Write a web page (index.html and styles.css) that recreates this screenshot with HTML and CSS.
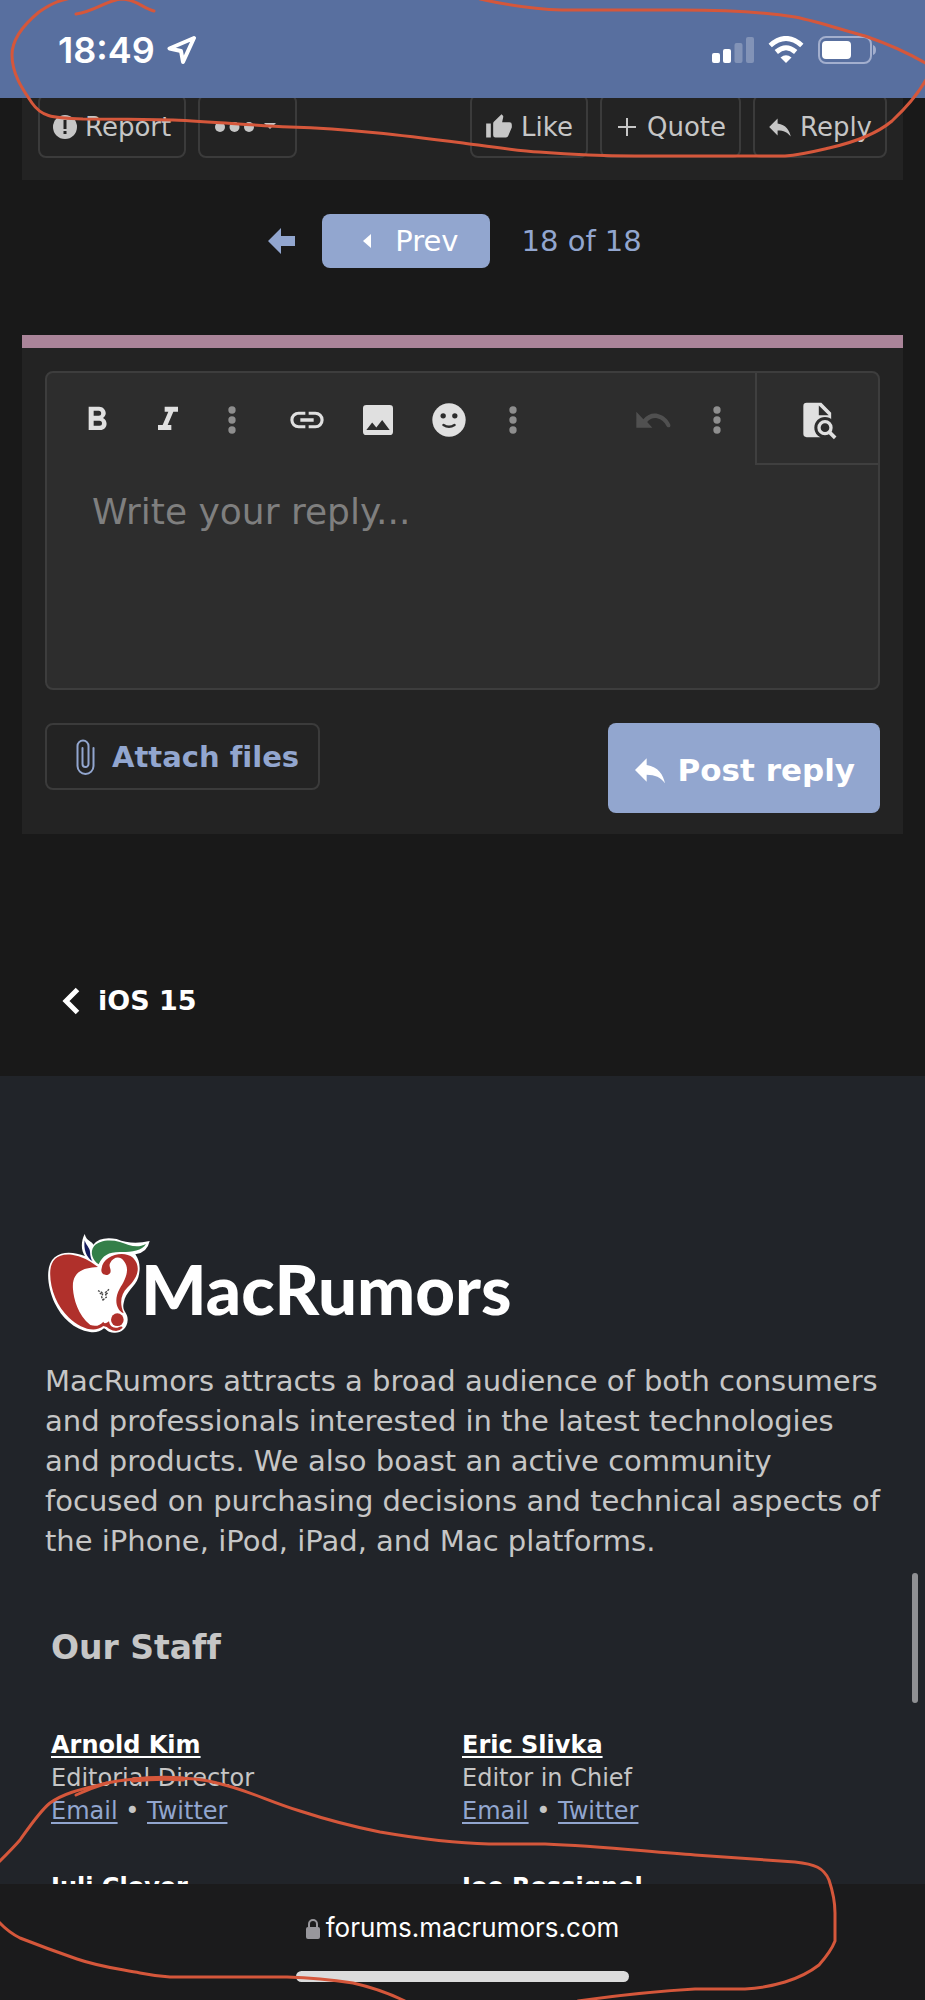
FILE: index.html
```
<!DOCTYPE html>
<html lang="en">
<head>
<meta charset="utf-8">
<meta name="viewport" content="width=device-width">
<title>MacRumors Forums</title>
<link rel="stylesheet" href="styles.css">
</head>
<body>
<header class="status">
  <span class="status-time">18:49</span>
  <svg class="location" width="30" height="30" viewBox="0 0 30 30" aria-hidden="true"><path d="M27 3 L2.500 13.500 L14 16 L16 27 Z"/></svg>
  <div class="status-icons">
    <svg width="42" height="28" viewBox="0 0 42 28" fill="#fff" aria-hidden="true"><rect y="17" width="8" height="10" rx="2"/><rect x="11" y="13" width="8" height="14" rx="2"/><g opacity=".25"><rect x="22.500" y="7" width="8" height="20" rx="2"/><rect x="34" y="1" width="8" height="26" rx="2"/></g></svg>
    <svg width="36" height="28" viewBox="0 0 36 28" aria-hidden="true"><g fill="none" stroke="#fff" stroke-width="5"><path d="M2.200 9.500Q18-4.500 33.800 9.500"/><path d="M8.300 16Q18 7.500 27.700 16"/></g><path d="M12.500 21.500Q18 17 23.500 21.500L18 27Z" fill="#fff"/></svg>
    <svg width="59" height="28" viewBox="0 0 59 28" aria-hidden="true"><rect x="1" y="1" width="52" height="26" rx="7" fill="none" stroke="#a3afce" stroke-width="2"/><rect x="4" y="5" width="29" height="18" rx="4" fill="#fff"/><path d="M55 9Q58 10 58 14T55 19Z" fill="#a3afce"/></svg>
  </div>
</header>

<main class="page">
  <section class="post">
    <div class="post-actions">
      <button class="action"><svg width="24" height="24" viewBox="0 0 24 24" aria-hidden="true"><circle cx="12" cy="12" r="12"/><path d="M10.500 5h3v9h-3zM10.500 16h3v3h-3z" fill="#232323"/></svg>Report</button>
      <button class="action" aria-label="More options"><svg width="69" height="24" viewBox="-1 0 69 24" aria-hidden="true"><circle cx="6" cy="12" r="5"/><circle cx="20.500" cy="12" r="5"/><circle cx="35" cy="12" r="5"/><path d="M50 8h12l-6 6z"/></svg></button>
      <span class="spacer"></span>
      <button class="action"><svg width="28" height="28" viewBox="0 0 24 24" aria-hidden="true"><path d="M23 10a2 2 0 0 0-2-2h-6.320l.96-4.570c.02-.1.030-.21.030-.32 0-.41-.17-.79-.44-1.060L14.170 1 7.590 7.580C7.220 7.950 7 8.450 7 9v10a2 2 0 0 0 2 2h9c.83 0 1.540-.5 1.840-1.220l3.020-7.050c.09-.23.14-.47.14-.73zM1 21h4V9H1z"/></svg>Like</button>
      <button class="action"><svg width="24" height="24" viewBox="0 0 24 24" aria-hidden="true"><path d="M11 3h2v8h8v2h-8v8h-2v-8H3v-2h8z"/></svg>Quote</button>
      <button class="action"><svg width="24" height="24" viewBox="2 2 20 20" aria-hidden="true"><path d="M10 9V5l-7 7 7 7v-4.100c5 0 8.500 1.600 11 5.100-1-5-4-10-11-11z"/></svg>Reply</button>
    </div>
  </section>

  <nav class="pager" aria-label="Pages">
    <a class="first" href="#first" aria-label="First page"><svg width="27" height="26" viewBox="0 0 27 26" aria-hidden="true"><path d="M0 13L13 0v8h14v10H13v8z"/></svg></a>
    <a class="prev" href="#prev"><svg width="8" height="14" viewBox="0 0 8 14" aria-hidden="true"><path d="M0 7l8-7v14z"/></svg>Prev</a>
    <a class="count" href="#pages">18 of 18</a>
  </nav>

  <form class="reply">
    <div class="editor">
      <div class="toolbar">
        <button type="button" class="tool" aria-label="Bold"><svg class="icon" viewBox="0 0 24 24"><path d="M13.500 15.500H10v-3h3.500a1.500 1.500 0 0 1 0 3M10 6.500h3a1.500 1.500 0 0 1 0 3h-3m5.600 1.290c.97-.68 1.650-1.790 1.650-2.790 0-2.260-1.750-4-4-4H7v14h7.040c2.100 0 3.710-1.700 3.710-3.790 0-1.520-.86-2.820-2.150-3.420z"/></svg></button>
        <button type="button" class="tool" aria-label="Italic"><svg class="icon" viewBox="0 0 24 24"><path d="M10 4v3h2.210l-3.420 8H6v3h8v-3h-2.210l3.420-8H18V4z"/></svg></button>
        <button type="button" class="tool more" aria-label="More text options"><svg class="icon" viewBox="0 0 24 24"><circle cx="12" cy="6" r="2.200"/><circle cx="12" cy="12" r="2.200"/><circle cx="12" cy="18" r="2.200"/></svg></button>
        <button type="button" class="tool group" aria-label="Insert link"><svg class="icon" viewBox="0 0 24 24"><path d="M3.900 12c0-1.710 1.390-3.100 3.100-3.100h4V7H7a5 5 0 0 0 0 10h4v-1.900H7c-1.710 0-3.100-1.390-3.100-3.100M8 13h8v-2H8zm9-6h-4v1.900h4a3.100 3.100 0 0 1 0 6.200h-4V17h4a5 5 0 0 0 0-10z"/></svg></button>
        <button type="button" class="tool" aria-label="Insert image"><svg class="icon" viewBox="0 0 24 24"><path d="M8.500 13.500l2.500 3 3.500-4.500 4.500 6H5m16 1V5a2 2 0 0 0-2-2H5a2 2 0 0 0-2 2v14a2 2 0 0 0 2 2h14a2 2 0 0 0 2-2z"/></svg></button>
        <button type="button" class="tool" aria-label="Smilies"><svg class="icon" viewBox="0 0 24 24"><circle cx="12" cy="12" r="10"/><g fill="#2d2d2d"><circle cx="8.500" cy="9.500" r="1.600"/><circle cx="15.500" cy="9.500" r="1.600"/></g><path d="M8.700 15Q12 17.200 15.300 15" fill="none" stroke="#2d2d2d" stroke-width="1.500" stroke-linecap="round"/></svg></button>
        <button type="button" class="tool more" aria-label="More insert options"><svg class="icon" viewBox="0 0 24 24"><circle cx="12" cy="6" r="2.200"/><circle cx="12" cy="12" r="2.200"/><circle cx="12" cy="18" r="2.200"/></svg></button>
        <span class="spacer"></span>
        <button type="button" class="tool undo" aria-label="Undo"><svg class="icon" viewBox="0 0 24 24"><path d="M6.200 11.600C8.600 8.600 12 7.600 15 8.400c3.500.8 6 3.300 7.400 6.400.5 1.500-1.600 2.200-2.300.8-1.100-2.500-3-4.200-5.700-4.700-2.200-.4-4.400.4-5.900 2.300L11.600 16.600H2V7z"/></svg></button>
        <button type="button" class="tool more" aria-label="More options"><svg class="icon" viewBox="0 0 24 24"><circle cx="12" cy="6" r="2.200"/><circle cx="12" cy="12" r="2.200"/><circle cx="12" cy="18" r="2.200"/></svg></button>
        <button type="button" class="preview" aria-label="Preview"><svg class="icon" viewBox="0 0 24 24"><path d="M4 1.700h8.800l5.900 6V12q-8 0-8 6 0 2.500 1.600 4.300H4a2 2 0 0 1-2-2V3.700a2 2 0 0 1 2-2z"/><path d="M11.300 3.300v5.900h5.900z" fill="#2d2d2d"/><circle cx="15" cy="16.600" r="6.400" fill="#2d2d2d"/><circle cx="15" cy="16.600" r="3.600" fill="none" stroke="#e0e0e0" stroke-width="2"/><path d="M17.500 19.100l3.600 3.600" stroke="#e0e0e0" stroke-width="2.200"/></svg></button>
      </div>
      <textarea class="message" aria-label="Your reply" placeholder="Write your reply..."></textarea>
    </div>
    <div class="form-actions">
      <button type="button" class="attach"><svg width="24" height="40" viewBox="0 0 24 40" aria-hidden="true"><path d="M20.500 11v18a8 8 0 0 1-16 0V9a5.500 5.500 0 0 1 11 0v18a3 3 0 0 1-6 0V11"/></svg>Attach files</button>
      <button type="submit" class="submit"><svg class="icon" viewBox="0 0 24 24" aria-hidden="true"><path d="M10 9V5l-7 7 7 7v-4.100c5 0 8.500 1.600 11 5.100-1-5-4-10-11-11z"/></svg>Post reply</button>
    </div>
  </form>

  <nav class="crumbs" aria-label="Breadcrumb">
    <a href="#ios-15"><svg width="18" height="28" viewBox="0 0 18 28" aria-hidden="true"><path d="M15.500 2.500L4 14l11.500 11.500"/></svg>iOS 15</a>
  </nav>

  <footer class="footer">
    <a class="logo" href="#home">
      <svg class="apple" width="96" height="120" viewBox="15 0 288 360" aria-hidden="true">
        <path fill="#fff" d="M134 42C140 66 156 62 160 74Q180 48 230 57Q275 76 329 63Q322 98 286 103C300 122 302 146 295 172C286 201 257 214 251 249C245 275 264 276 263 300C262 327 240 340 222 338C202 338 200 328 192 325C181 335 166 338 150 336C102 329 65 293 44 249C22 200 14 138 44 112C69 91 105 97 135 108C122 91 123 62 134 42Z"/>
        <path fill="#b0302b" d="M174 141Q136 110 96 104C54 99 34 119 31 150C27 199 49 257 87 293C119 324 163 340 190 318Q202 320 207 326Q232 341 247 324Q250 316 232 323Q210 326 207 304Q193 315 190 305Q175 323 151 315C113 286 101 235 99 208C95 161 121 143 174 141Z"/>
        <path fill="#b0302b" d="M185 145C179 163 202 172 211 158C215 146 204 139 211 128C219 112 239 106 251 122C273 148 254 182 239 206C222 235 227 270 251 280C238 248 242 223 263 202C293 174 305 140 279 113C249 88 188 108 185 145Z"/>
        <circle cx="232" cy="299" r="19" fill="#b0302b"/>
        <path fill="#151b5c" d="M134 61C137 74 149 83 150 95Q151 115 158 124C138 113 130 86 134 61Z"/>
        <path fill="#347f48" d="M176 133C158 122 148 96 162 79C177 61 210 58 240 66C268 75 290 87 318 72C306 94 266 97 239 96C205 96 188 107 176 133Z"/>
        <g stroke="#444" stroke-width="4" fill="none" stroke-dasharray="6 3"><path d="M174 212l15 7-4 12 5 11M207 208l-11 10 3 14-11 8M179 220l8 2M203 219l-6 4"/></g>
      </svg>
      <span class="wordmark">MacRumors</span>
    </a>
    <p class="about">MacRumors attracts a broad audience of both consumers and professionals interested in the latest technologies and products. We also boast an active community focused on purchasing decisions and technical aspects of the iPhone, iPod, iPad, and Mac platforms.</p>
    <h2 class="staff-title">Our Staff</h2>
    <div class="staff">
      <div><a class="name" href="#arnold">Arnold Kim</a><p>Editorial Director</p><p><a class="contact" href="#mail-1">Email</a> • <a class="contact" href="#tw-1">Twitter</a></p></div>
      <div><a class="name" href="#eric">Eric Slivka</a><p>Editor in Chief</p><p><a class="contact" href="#mail-2">Email</a> • <a class="contact" href="#tw-2">Twitter</a></p></div>
      <div><a class="name" href="#juli">Juli Clover</a></div>
      <div><a class="name" href="#joe">Joe Rossignol</a></div>
    </div>
  </footer>
</main>

<div class="browser-bar">
  <div class="address"><svg width="14" height="21" viewBox="0 0 14 21" aria-hidden="true"><rect y="9" width="14" height="12" rx="2" fill="#98979c"/><path d="M3 10V6a4 4 0 0 1 8 0v4" fill="none" stroke="#98979c" stroke-width="2"/></svg><span>forums.macrumors.com</span></div>
  <div class="home"></div>
</div>
<div class="scroll-thumb"></div>

<svg class="marks" viewBox="0 0 925 2000" preserveAspectRatio="none" aria-hidden="true">
  <path d="M76 14C96 11 106 0 122-1C135-1 143 8 154 11"/>
  <path d="M85-3C62-3 49 5 39 12C22 26 12 40 12 55C12 75 24 91 32 103C41 116 50 118 83 119Q128 119 173 120C215 122 250 125 290 127C350 129 400 135 463 143C500 148 520 151 539 152Q590 156 635 156H785C800 155 812 152 829 148C860 141 880 131 892 121C909 105 920 91 927 78"/>
  <path d="M480-1Q525 9 562 10H680C740 10 770 13 795 17C820 22 842 30 865 36Q900 48 927 64"/>
  <path d="M-2 1863C6 1855 13 1848 20 1840C30 1826 40 1811 50 1803C67 1791 88 1788 107 1783Q130 1778 160 1778C190 1778 203 1779 217 1783C245 1789 270 1802 300 1811Q340 1824 380 1832C415 1838 450 1843 489 1844H545C600 1846 650 1852 695 1855Q750 1859 795 1862C815 1864 824 1868 829 1880C833 1892 835 1905 835 1913V1941C832 1949 826 1957 819 1965C810 1972 798 1978 785 1982Q765 1988 745 1989H695C660 1991 620 1995 578 2001"/>
  <path d="M76 1795Q91 1788 107 1783"/>
  <path d="M133 1780Q160 1777 183 1779" stroke-width="5"/>
  <path d="M-2 1921Q8 1932 20 1938Q48 1949 77 1959C100 1967 120 1969 140 1973Q155 1976 170 1977H287Q320 1978 353 1983Q380 1989 405 2001"/>
</svg>
</body>
</html>
```
FILE: styles.css
```
* { box-sizing: border-box; }

body {
  margin: 0;
  height: 100vh;
  display: flex;
  flex-direction: column;
  position: relative;
  overflow: hidden;
  background: #191919;
  color: #c6c6c6;
  font-family: Verdana, "DejaVu Sans", sans-serif;
  font-variant-ligatures: none;
}

button, textarea { font: inherit; color: inherit; margin: 0; }
button { background: none; border: 0; padding: 0; cursor: pointer; }
a { color: inherit; text-decoration: none; }
p { margin: 0; }
svg { flex: none; fill: currentColor; }
.spacer { flex: 1; }
.icon { width: 40px; height: 40px; }

.status {
  flex: none;
  position: relative;
  z-index: 1;
  height: 98px;
  padding: 2px 48px 0 58px;
  display: flex;
  align-items: center;
  gap: 12px;
  background: #586f9f;
  color: #fff;
}
.status-time { font: 600 36px/40px Inter, sans-serif; }
.location { fill: none; stroke: #fff; stroke-width: 4; stroke-linejoin: round; }
.status-icons { margin-left: auto; display: flex; align-items: center; gap: 14px; }

.page { flex: 1; min-height: 0; overflow: hidden; }

.post { margin: 0 22px; padding: 0 16px 22px; background: #232323; }
.post-actions { display: flex; gap: 12px; margin-top: -4px; }
.action {
  height: 64px;
  padding: 1px 13px 0;
  display: flex;
  align-items: center;
  gap: 8px;
  border: 2px solid #3b3b3b;
  border-radius: 8px;
  font-size: 26px;
}

.pager {
  margin-top: 34px;
  padding-right: 15px;
  display: flex;
  justify-content: center;
  align-items: center;
  color: #92a6cf;
  font-size: 29px;
}
.first { display: flex; margin-right: 27px; }
.prev {
  height: 54px;
  padding: 0 31px 0 41px;
  display: flex;
  align-items: center;
  gap: 24px;
  border-radius: 8px;
  background: #92a6cf;
  color: #fff;
}
.count { margin-left: 32px; }

.reply {
  margin: 67px 22px 0;
  padding: 23px 23px 21px;
  border-top: 13px solid #aa8499;
  background: #232323;
}
.editor {
  display: flex;
  flex-direction: column;
  border: 2px solid #3d3d3d;
  border-radius: 8px;
  background: #2d2d2d;
}
.toolbar { display: flex; align-items: center; padding-left: 14px; color: #e0e0e0; }
.tool { width: 71px; height: 92px; padding-top: 2px; display: flex; justify-content: center; align-items: center; }
.more { width: 58px; color: #8e8e8e; }
.group { margin-left: 10px; }
.undo { color: #505050; }
.preview {
  width: 123px;
  height: 92px;
  margin-left: 9px;
  padding: 4px 0 0 4px;
  display: flex;
  justify-content: center;
  align-items: center;
  border: solid #3f3f3f;
  border-width: 0 0 2px 2px;
}
.message {
  width: 100%;
  height: 223px;
  padding: 25px 45px;
  border: 0;
  outline: 0;
  resize: none;
  background: none;
  font-size: 36px;
  line-height: 44px;
}
.message::placeholder { color: #7f7f7f; opacity: 1; }

.form-actions {
  margin-top: 33px;
  display: flex;
  justify-content: space-between;
  align-items: flex-start;
  font-weight: bold;
}
.attach {
  height: 67px;
  padding: 0 19px 0 26px;
  display: flex;
  align-items: center;
  gap: 15px;
  border: 2px solid #3b3b3b;
  border-radius: 8px;
  color: #92a6cf;
  font-size: 29px;
}
.attach svg { fill: none; stroke: currentColor; stroke-width: 2; stroke-linecap: round; }
.submit {
  height: 90px;
  padding: 3px 25px 0 22px;
  display: flex;
  align-items: center;
  gap: 8px;
  border-radius: 8px;
  background: #92a6cf;
  color: #fff;
  font-size: 31px;
}

.crumbs { margin-top: 147px; padding: 0 62px 55px; }
.crumbs a {
  display: inline-flex;
  align-items: center;
  gap: 18px;
  color: #fff;
  font-weight: bold;
  font-size: 27px;
  line-height: 40px;
  vertical-align: top;
}
.crumbs svg { fill: none; stroke: currentColor; stroke-width: 5; }

.footer { min-height: 100%; padding: 144px 36px 0 45px; background: #212429; }
.logo { display: flex; align-items: flex-start; }
.apple { overflow: visible; }
.wordmark { margin-top: 29px; color: #fff; font: 900 69px/80px Lato, sans-serif; }
.about { margin-top: 21px; font-size: 29px; line-height: 40px; }
.staff-title { margin: 67px 0 0 6px; font-size: 33px; line-height: 40px; }
.staff {
  margin: 61px 16px 0 6px;
  display: grid;
  grid-template-columns: 1fr 1fr;
  gap: 43px 0;
  font-size: 24px;
  line-height: 33px;
}
.name, .contact { text-decoration: underline; text-decoration-thickness: 2px; text-underline-offset: 3px; text-decoration-skip-ink: none; }
.name { display: block; color: #fff; font-weight: bold; }
.contact { color: #92a6cf; }

.browser-bar {
  flex: none;
  padding: 27px 0 18px;
  background: #1b1b1c;
  color: #fff;
}
.address { display: flex; justify-content: center; align-items: center; gap: 6px; font: 26px/34px Inter, sans-serif; }
.home { width: 36%; height: 11px; margin: 26px auto 0; border-radius: 6px; background: #dcdcdc; }

.scroll-thumb {
  position: absolute;
  right: 7px;
  top: 1573px;
  width: 6px;
  height: 130px;
  border-radius: 3px;
  background: #8f9093;
}
.marks {
  position: absolute;
  z-index: 2;
  inset: 0;
  width: 100%;
  height: 100%;
  pointer-events: none;
  fill: none;
  stroke: #d5573b;
  stroke-width: 3;
  stroke-linecap: round;
}
```
